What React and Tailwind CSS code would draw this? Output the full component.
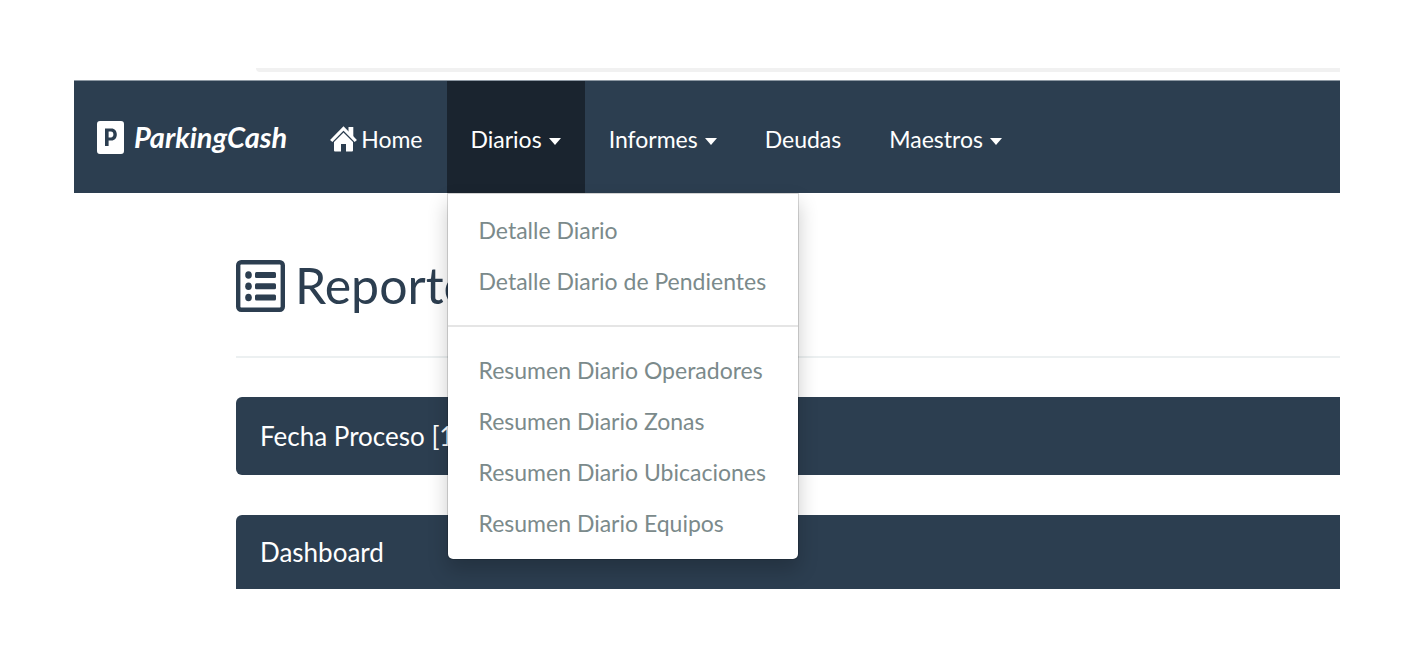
import React from "react";

const menuGroups = [
  ["Detalle Diario", "Detalle Diario de Pendientes"],
  [
    "Resumen Diario Operadores",
    "Resumen Diario Zonas",
    "Resumen Diario Ubicaciones",
    "Resumen Diario Equipos",
  ],
];

function ParkingIcon() {
  return (
    <svg viewBox="0 0 27 33" className="h-[33px] w-[27px]" aria-hidden="true">
      <path
        fill="currentColor"
        fillRule="evenodd"
        d="M3 0h21a3 3 0 0 1 3 3v27a3 3 0 0 1-3 3H3a3 3 0 0 1-3-3V3a3 3 0 0 1 3-3ZM8 7.500V25h3.600v-5.500h2.800c3.400 0 5.400-2.600 5.400-6s-2-6-5.400-6ZM11.600 10.600h2.300c1.600 0 2.500 1.200 2.500 2.900s-.9 2.900-2.500 2.900h-2.300Z"
      />
    </svg>
  );
}

function HomeIcon() {
  return (
    <svg viewBox="0 0 27 26" className="h-[26px] w-[27px]" aria-hidden="true">
      <path
        fill="none"
        stroke="currentColor"
        strokeWidth="3.200"
        d="M1.200 15 13.500 2.500 25.800 15"
      />
      <path fill="currentColor" d="M18.500 1h4.800v11l-4.800-5Z" />
      <path
        fill="currentColor"
        d="M13.500 6.400 23 16V24.500q0 1-1 1h-6V18h-5v7.500H5q-1 0-1-1V16Z"
      />
    </svg>
  );
}

function ListIcon() {
  return (
    <svg viewBox="0 0 49 52" className="h-[52px] w-[49px]" aria-hidden="true">
      <rect x="2.200" y="2.200" width="44.600" height="47.600" rx="3" fill="none" stroke="currentColor" strokeWidth="4.400" />
      <g fill="currentColor">
        <ellipse cx="12.500" cy="15" rx="3.300" ry="3.800" />
        <ellipse cx="12.500" cy="26.200" rx="3.300" ry="3.800" />
        <ellipse cx="12.500" cy="37.500" rx="3.300" ry="3.800" />
        <rect x="19" y="12" width="21" height="6" rx="1.500" />
        <rect x="19" y="23.200" width="21" height="6" rx="1.500" />
        <rect x="19" y="34.500" width="21" height="6" rx="1.500" />
      </g>
    </svg>
  );
}

function Caret() {
  return (
    <svg viewBox="0 0 12 7" className="mt-1 h-[7px] w-3" aria-hidden="true">
      <path fill="currentColor" d="M0 0h12L6 7Z" />
    </svg>
  );
}

function NavMenuButton({ label, open }) {
  return (
    <button
      type="button"
      aria-haspopup="menu"
      aria-expanded={open}
      className={
        open
          ? "flex h-full items-center gap-[7px] bg-[#1a242f] px-6 pt-1"
          : "flex h-full items-center gap-[7px] px-6 pt-1"
      }
    >
      {label}
      <Caret />
    </button>
  );
}

function DiariosMenu() {
  return (
    <div className="absolute top-full left-0 z-10 w-[352px] rounded-b-md border border-black/15 bg-white bg-clip-padding pt-[11px] pb-[10px] text-[#7b8a8b] shadow-[0_10px_20px_rgba(0,0,0,0.2)]">
      {menuGroups.map((group, index) => (
        <React.Fragment key={group[0]}>
          {index > 0 && <hr className="my-[18px] h-0.5 border-0 bg-[#e5e5e5]" />}
          <ul>
            {group.map((item) => (
              <li key={item}>
                <a href="#" className="block px-[31px] leading-[51px] whitespace-nowrap">
                  {item}
                </a>
              </li>
            ))}
          </ul>
        </React.Fragment>
      ))}
    </div>
  );
}

export default function App() {
  return (
    <div className="bg-white pt-[68px] pr-[76px] pb-[75px] pl-[74px] font-['Lato',sans-serif] text-[23px] text-white">
      <div className="ml-[182px] h-1 rounded-bl bg-[#f1f1f1]" />
      <nav className="mt-2 flex h-[113px] items-stretch border-t border-[#8d98a3] bg-[#2c3e50]">
        <a href="#" className="flex items-center gap-[10px] pr-5 pl-[23px] text-[29px] font-bold italic">
          <ParkingIcon />
          ParkingCash
        </a>
        <a href="#" className="flex items-center gap-1 pr-6 pl-[23px] pt-1">
          <HomeIcon />
          Home
        </a>
        <div className="relative">
          <NavMenuButton label="Diarios" open />
          <DiariosMenu />
        </div>
        <NavMenuButton label="Informes" open={false} />
        <a href="#" className="flex items-center px-6 pt-1">
          Deudas
        </a>
        <NavMenuButton label="Maestros" open={false} />
      </nav>
      <main className="ml-[162px]">
        <h1 className="flex h-[165px] items-center gap-[10px] border-b-2 border-[#ecf0f1] pt-[22px] text-[50px] text-[#2c3e50]">
          <ListIcon />
          Reporte
        </h1>
        <section className="mt-[39px] rounded-l-md bg-[#2c3e50] px-6">
          <h2 className="text-[26px] leading-[78px]">Fecha Proceso [1</h2>
        </section>
        <section className="mt-10 rounded-tl-md bg-[#2c3e50] px-6">
          <h2 className="text-[26px] leading-[74px]">Dashboard</h2>
        </section>
      </main>
    </div>
  );
}
